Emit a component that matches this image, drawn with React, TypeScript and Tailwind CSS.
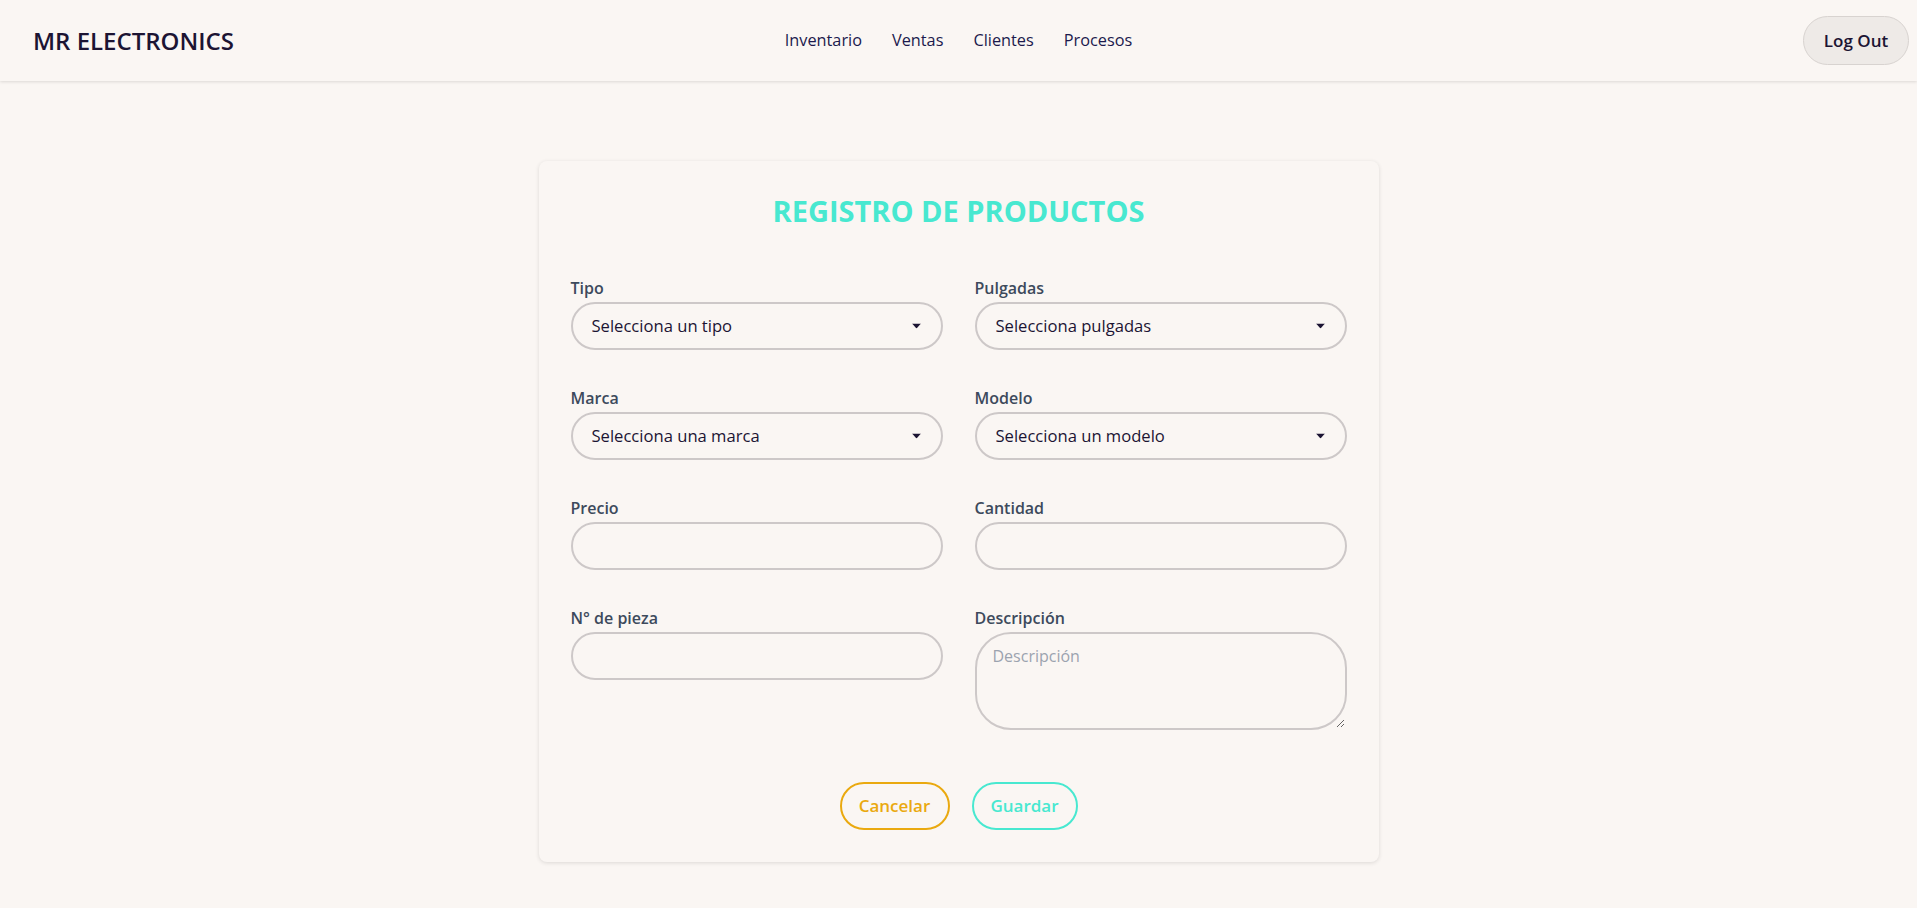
import React from "react";

const font = { fontFamily: '"Open Sans", "Noto Sans", sans-serif' };

function Arrow() {
  return (
    <svg width="9" height="5" viewBox="0 0 9 5" className="pointer-events-none absolute right-[22px] top-1/2 -translate-y-1/2">
      <path d="M0 0 L9 0 L4.5 5 Z" fill="#1c1433" />
    </svg>
  );
}

function SelectField({ label, placeholder }: { label: string; placeholder: string }) {
  return (
    <div className="flex flex-col">
      <label className="mb-0.5 text-base leading-6 font-semibold text-[#3d4a5c]">{label}</label>
      <div className="relative">
        <select
          className="h-12 w-full appearance-none rounded-full border-2 border-[#cdc8c8] bg-transparent pl-[19px] pr-10 text-[16.6px] text-[#1c1433] outline-none"
          style={font}
          defaultValue=""
        >
          <option value="">{placeholder}</option>
        </select>
        <Arrow />
      </div>
    </div>
  );
}

function InputField({ label }: { label: string }) {
  return (
    <div className="flex flex-col">
      <label className="mb-0.5 text-base leading-6 font-semibold text-[#3d4a5c]">{label}</label>
      <input
        className="h-12 w-full rounded-full border-2 border-[#cdc8c8] bg-transparent px-4 text-base text-[#1c1433] outline-none"
        style={font}
      />
    </div>
  );
}

export default function App() {
  return (
    <div className="min-h-[908px] bg-[#faf6f3]" style={font}>
      <nav className="relative flex h-[81px] items-center justify-between bg-[#faf6f3] pl-[33px] pr-2 shadow-[0_1px_3px_rgba(0,0,0,0.12)]">
        <div className="w-[300px] text-[24px] font-semibold text-[#1c1433]">MR ELECTRONICS</div>
        <div className="flex items-center gap-[30px] text-[16.3px] text-[#1c1a4d]">
          <span>Inventario</span>
          <span>Ventas</span>
          <span>Clientes</span>
          <span>Procesos</span>
        </div>
        <div className="flex w-[325px] justify-end">
          <button className="h-[49px] w-[106px] rounded-full border border-[#d8d3d0] bg-[#eeeae7] text-[17px] font-semibold text-[#1c1433]">
            Log Out
          </button>
        </div>
      </nav>

      <main className="flex justify-center pt-20">
        <div className="w-[840px] rounded-lg bg-[#faf6f3] p-8 shadow-[0_1px_4px_rgba(0,0,0,0.12)]">
          <h1 className="mb-[47px] text-center text-[29px] leading-9 font-bold text-[#48e8d0]">REGISTRO DE PRODUCTOS</h1>
          <div className="grid grid-cols-2 gap-x-8 gap-y-9">
            <SelectField label="Tipo" placeholder="Selecciona un tipo" />
            <SelectField label="Pulgadas" placeholder="Selecciona pulgadas" />
            <SelectField label="Marca" placeholder="Selecciona una marca" />
            <SelectField label="Modelo" placeholder="Selecciona un modelo" />
            <InputField label="Precio" />
            <InputField label="Cantidad" />
            <InputField label="N° de pieza" />
            <div className="flex flex-col">
              <label className="mb-0.5 text-base leading-6 font-semibold text-[#3d4a5c]">Descripción</label>
              <textarea
                placeholder="Descripción"
                className="h-[98px] w-full rounded-[36px] border-2 border-[#cdc8c8] bg-transparent px-4 py-[10px] text-base text-[#1c1433] outline-none placeholder:text-[#9ca3af]"
                style={font}
              />
            </div>
          </div>
          <div className="mt-[52px] flex justify-center gap-[22px]">
            <button className="h-12 w-[110px] rounded-full border-2 border-[#eaa90f] text-[17px] font-semibold text-[#eaa90f]">
              Cancelar
            </button>
            <button className="h-12 w-[106px] rounded-full border-2 border-[#48e8d0] text-[17px] font-semibold text-[#48e8d0]">
              Guardar
            </button>
          </div>
        </div>
      </main>
    </div>
  );
}
